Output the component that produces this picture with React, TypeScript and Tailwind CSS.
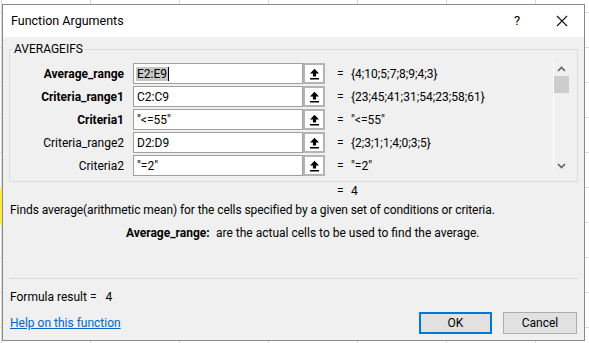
import React from 'react';

const ARGS = [
  { label: 'Average_range', bold: true, value: 'E2:E9', result: '{4;10;5;7;8;9;4;3}', selected: true },
  { label: 'Criteria_range1', bold: true, value: 'C2:C9', result: '{23;45;41;31;54;23;58;61}' },
  { label: 'Criteria1', bold: true, value: '"<=55"', result: '"<=55"' },
  { label: 'Criteria_range2', bold: false, value: 'D2:D9', result: '{2;3;1;1;4;0;3;5}' },
  { label: 'Criteria2', bold: false, value: '"=2"', result: '"=2"' },
];

function RefButton() {
  return (
    <div className="w-[22px] h-[21px] border-2 border-[#b4b4b4] bg-white flex items-center justify-center">
      <svg width="11" height="12" viewBox="0 0 11 12">
        <path d="M5.5 0.8 L1 5.6 H3.9 V8.6 H7.1 V5.6 H10 Z" fill="#000" />
        <rect x="1" y="10" width="9" height="1.5" fill="#000" />
      </svg>
    </div>
  );
}

function ArgRow({ arg }: { arg: (typeof ARGS)[number] }) {
  return (
    <div className="flex items-center h-[23px]">
      <div className={`w-[114px] text-right ${arg.bold ? 'font-bold' : ''}`}>{arg.label}</div>
      <div className="ml-[9px] w-[170px] h-[21px] border border-[#a0a0a0] bg-white flex items-center pl-[2px]">
        {arg.selected ? (
          <span className="flex items-center">
            <span className="bg-[#c8c8c8] px-[1px] leading-[14px]">{arg.value}</span>
            <span className="w-px h-[14px] bg-black" />
          </span>
        ) : (
          <span className="pl-[1px]">{arg.value}</span>
        )}
      </div>
      <RefButton />
      <div className="ml-[12px] w-[14px]">=</div>
      <div>{arg.result}</div>
    </div>
  );
}

function Scrollbar() {
  return (
    <div className="w-[16px] h-[111px] border-l border-white flex flex-col items-center justify-between py-[4px] mt-[5px]">
      <div className="flex flex-col items-center w-full">
        <svg width="9" height="6" viewBox="0 0 9 6">
          <path d="M1 5 L4.5 1.5 L8 5" stroke="#606060" strokeWidth="1.6" fill="none" />
        </svg>
        <div className="mt-[4px] w-[15px] h-[17px] bg-[#cdcdcd]" />
      </div>
      <svg width="9" height="6" viewBox="0 0 9 6">
        <path d="M1 1 L4.5 4.5 L8 1" stroke="#606060" strokeWidth="1.6" fill="none" />
      </svg>
    </div>
  );
}

export default function App() {
  return (
    <div
      className="relative w-[589px] h-[343px] overflow-hidden bg-white bg-[linear-gradient(to_right,#d8d8d8_1px,transparent_1px),linear-gradient(to_bottom,#d8d8d8_1px,transparent_1px)] bg-[size:89px_100%,100%_35px] bg-[position:1px_0,0_12px] pt-[4px] pl-[2px] text-[12px] text-black"
      style={{ fontFamily: "'Segoe UI', Roboto, 'Noto Sans', sans-serif" }}
    >
      <div className="absolute left-0 top-[189px] w-[2px] h-[36px] bg-[#ffeb3b]" />
      <div className="relative w-[583px] h-[337px] border border-[#8a8a8a] bg-[#f0f0f0] flex flex-col">
        {/* title bar */}
        <div className="h-[32px] bg-white flex items-center pl-[8px]">
          <div className="flex-1 text-[12.5px]">Function Arguments</div>
          <div className="w-[20px] text-center text-[13px] mr-[25px]">?</div>
          <div className="w-[20px] flex justify-center mr-[12px]">
            <svg width="12" height="12" viewBox="0 0 12 12">
              <path d="M1 1 L11 11 M11 1 L1 11" stroke="#111" strokeWidth="1.1" />
            </svg>
          </div>
        </div>

        {/* argument group */}
        <fieldset className="ml-[6px] mt-[4px] w-[569px] h-[141px] border border-[#dcdcdc] flex">
          <legend className="ml-[3px] px-[1px] leading-[16px]">AVERAGEIFS</legend>
          <div className="flex-1 flex flex-col pt-[5px]">
            {ARGS.map(a => (
              <ArgRow key={a.label} arg={a} />
            ))}
          </div>
          <Scrollbar />
          <div className="w-[8px]" />
        </fieldset>

        <div className="flex pl-[334px] h-[18px] items-center">
          <span className="w-[14px]">=</span>
          <span>4</span>
        </div>
        <div className="pl-[7px] mt-[1px] h-[18px] leading-[18px] tracking-[-0.08px]">
          Finds average(arithmetic mean) for the cells specified by a given set of conditions or criteria.
        </div>
        <div className="flex pl-[123px] mt-[5px] h-[18px] leading-[18px]">
          <span className="font-bold w-[90px]">Average_range:</span>
          <span>are the actual cells to be used to find the average.</span>
        </div>

        <div className="ml-[6px] mr-[6px] mt-[36px] border-t border-[#d9d9d9]" />
        <div className="pl-[7px] mt-[9px] h-[18px] leading-[18px]">
          Formula result = <span className="ml-[6px]">4</span>
        </div>
        <div className="flex items-center pl-[7px] mt-[6px]">
          <a className="flex-1 text-[#0066cc] underline leading-[18px]">Help on this function</a>
          <button className="w-[73px] h-[22px] border-2 border-[#0078d7] bg-[#e1e1e1]">OK</button>
          <button className="ml-[11px] mr-[7px] w-[74px] h-[22px] border border-[#adadad] bg-[#e1e1e1]">Cancel</button>
        </div>
      </div>
    </div>
  );
}
